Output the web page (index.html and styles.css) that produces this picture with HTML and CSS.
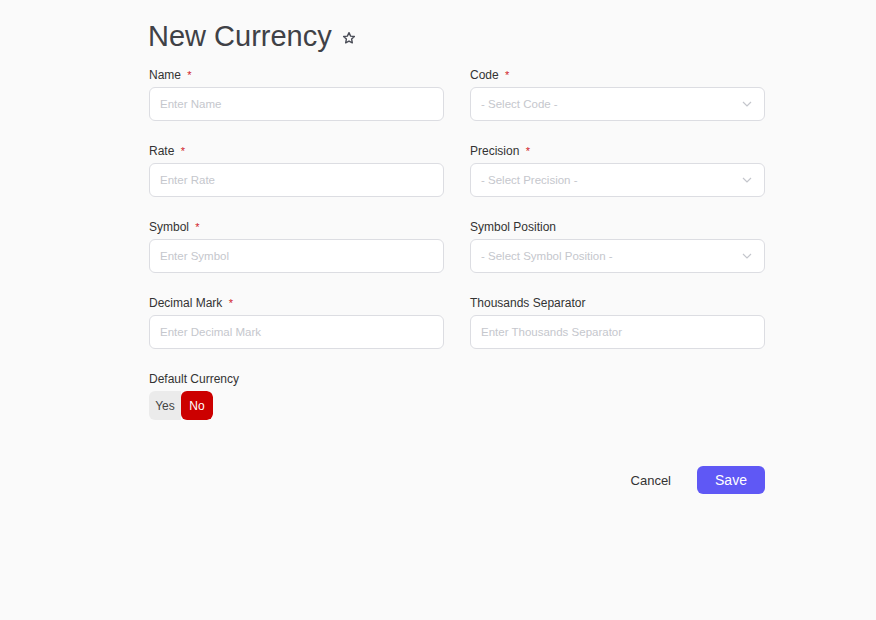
FILE: index.html
```html
<!DOCTYPE html>
<html>
<head>
<meta charset="utf-8">
<link rel="stylesheet" href="styles.css">
</head>
<body>
<div class="page">
  <div class="header">
    <h1 class="title">New Currency</h1>
    <svg class="star" width="14" height="14" viewBox="0 0 24 24"><path d="M12 2.8l2.8 5.9 6.4.8-4.7 4.4 1.2 6.4L12 17.2l-5.7 3.1 1.2-6.4-4.7-4.4 6.4-.8z" fill="none" stroke="#4a4d57" stroke-width="2.4" stroke-linejoin="round"/></svg>
  </div>
  <div class="grid">
    <div class="field">
      <div class="label">Name <span class="req">*</span></div>
      <div class="input"><span class="ph">Enter Name</span></div>
    </div>
    <div class="field">
      <div class="label">Code <span class="req">*</span></div>
      <div class="input select"><span class="ph">- Select Code -</span><svg class="chev" width="10" height="6" viewBox="0 0 10 6"><path d="M1 1l4 4 4-4" fill="none" stroke="#c4c6cc" stroke-width="1.2"/></svg></div>
    </div>
    <div class="field">
      <div class="label">Rate <span class="req">*</span></div>
      <div class="input"><span class="ph">Enter Rate</span></div>
    </div>
    <div class="field">
      <div class="label">Precision <span class="req">*</span></div>
      <div class="input select"><span class="ph">- Select Precision -</span><svg class="chev" width="10" height="6" viewBox="0 0 10 6"><path d="M1 1l4 4 4-4" fill="none" stroke="#c4c6cc" stroke-width="1.2"/></svg></div>
    </div>
    <div class="field">
      <div class="label">Symbol <span class="req">*</span></div>
      <div class="input"><span class="ph">Enter Symbol</span></div>
    </div>
    <div class="field">
      <div class="label">Symbol Position</div>
      <div class="input select"><span class="ph">- Select Symbol Position -</span><svg class="chev" width="10" height="6" viewBox="0 0 10 6"><path d="M1 1l4 4 4-4" fill="none" stroke="#c4c6cc" stroke-width="1.2"/></svg></div>
    </div>
    <div class="field">
      <div class="label">Decimal Mark <span class="req">*</span></div>
      <div class="input"><span class="ph">Enter Decimal Mark</span></div>
    </div>
    <div class="field">
      <div class="label">Thousands Separator</div>
      <div class="input"><span class="ph">Enter Thousands Separator</span></div>
    </div>
    <div class="field">
      <div class="label">Default Currency</div>
      <div class="toggle"><span class="opt yes">Yes</span><span class="opt no">No</span></div>
    </div>
  </div>
  <div class="actions">
    <span class="cancel">Cancel</span>
    <span class="save">Save</span>
  </div>
</div>
</body>
</html>
```
FILE: styles.css
```css
html, body {
  margin: 0;
  padding: 0;
  background: #fafafa;
  font-family: "Liberation Sans", Arial, sans-serif;
}
.page {
  width: 616px;
  margin-left: 149px;
  padding-top: 18px;
}
.header {
  display: flex;
  align-items: center;
  gap: 10px;
  height: 36px;
}
.title {
  margin: 0 0 0 -1px;
  font-size: 29px;
  font-weight: normal;
  color: #404146;
  line-height: 36px;
}
.star {
  margin-top: 4px;
}
.grid {
  display: grid;
  grid-template-columns: 295px 295px;
  column-gap: 26px;
  row-gap: 22px;
  margin-top: 13px;
}
.field {
  display: flex;
  flex-direction: column;
  gap: 4px;
}
.label {
  font-size: 12px;
  line-height: 16px;
  color: #333;
}
.req {
  color: #d11a2a;
  margin-left: 3px;
  font-size: 11px;
}
.input {
  box-sizing: border-box;
  height: 34px;
  background: #fff;
  border: 1px solid #dcdde2;
  border-radius: 6px;
  padding: 0 10px;
  display: flex;
  align-items: center;
  justify-content: space-between;
}
.ph {
  font-size: 11.5px;
  color: #c5c7cd;
}
.chev {
  margin-right: 2px;
}
.toggle {
  display: flex;
  height: 29px;
  width: 64px;
  border-radius: 6px;
  overflow: hidden;
  font-size: 12px;
}
.opt {
  display: flex;
  align-items: center;
  justify-content: center;
}
.yes {
  width: 32px;
  background: #ebebeb;
  color: #444;
}
.no {
  width: 32px;
  background: #cc0000;
  color: #fff;
  border-radius: 6px;
}
.actions {
  display: flex;
  justify-content: flex-end;
  align-items: center;
  gap: 26px;
  margin-top: 46px;
}
.cancel {
  font-size: 13px;
  color: #333;
}
.save {
  display: flex;
  align-items: center;
  justify-content: center;
  width: 68px;
  height: 28px;
  background: #5f58f5;
  color: #fff;
  font-size: 14px;
  border-radius: 6px;
}
```
